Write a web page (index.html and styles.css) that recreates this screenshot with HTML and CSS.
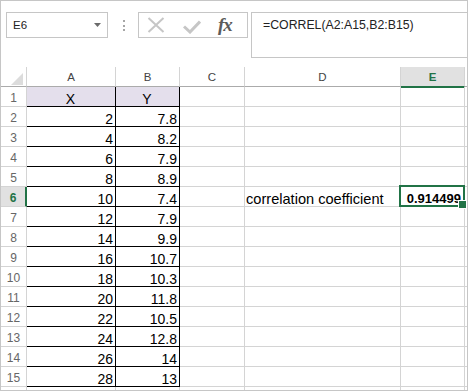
FILE: index.html
```html
<!DOCTYPE html>
<html lang="en">
<head>
  <meta charset="UTF-8">
  <title>CORREL</title>
  <link rel="stylesheet" href="styles.css">
</head>
<body>
  <div class="window">
    <div class="formula-bar">
      <div class="name-box">
        <span>E6</span>
        <svg width="7" height="4" viewBox="0 0 7 4"><polygon points="0,0 7,0 3.5,4" fill="#6b6b6b"/></svg>
      </div>
      <div class="grip"><i></i><i></i><i></i></div>
      <div class="fx-buttons">
        <svg class="icon-x" width="18" height="16" viewBox="0 0 18 16">
          <path d="M1.5 1 L16.5 15 M16.5 1 L1.5 15" stroke="#c6c6c6" stroke-width="2" fill="none"/>
        </svg>
        <svg class="icon-ok" width="18" height="14" viewBox="0 0 18 14">
          <path d="M1 6.5 L7 12 L17 1.5" stroke="#c6c6c6" stroke-width="3" fill="none"/>
        </svg>
        <span class="fx">fx</span>
      </div>
      <div class="formula-input">=CORREL(A2:A15,B2:B15)</div>
    </div>

    <div class="sheet">
      <div class="corner"><svg width="12" height="12" viewBox="0 0 12 12"><polygon points="12,0 12,12 0,12" fill="#dcdcdc"/></svg></div>
      <div class="col-head">A</div>
      <div class="col-head">B</div>
      <div class="col-head">C</div>
      <div class="col-head">D</div>
      <div class="col-head active">E</div>
      <div class="col-head"></div>

      <div class="row-head">1</div>
      <div class="cell box title">X</div>
      <div class="cell box title">Y</div>
      <div class="cell"></div><div class="cell"></div><div class="cell"></div><div class="cell"></div>

      <div class="row-head">2</div>
      <div class="cell box num">2</div><div class="cell box num">7.8</div>
      <div class="cell"></div><div class="cell"></div><div class="cell"></div><div class="cell"></div>

      <div class="row-head">3</div>
      <div class="cell box num">4</div><div class="cell box num">8.2</div>
      <div class="cell"></div><div class="cell"></div><div class="cell"></div><div class="cell"></div>

      <div class="row-head">4</div>
      <div class="cell box num">6</div><div class="cell box num">7.9</div>
      <div class="cell"></div><div class="cell"></div><div class="cell"></div><div class="cell"></div>

      <div class="row-head">5</div>
      <div class="cell box num">8</div><div class="cell box num">8.9</div>
      <div class="cell"></div><div class="cell"></div><div class="cell"></div><div class="cell"></div>

      <div class="row-head active">6</div>
      <div class="cell box num">10</div><div class="cell box num">7.4</div>
      <div class="cell"></div>
      <div class="cell label">correlation coefficient</div>
      <div class="cell num result">0.914499</div>
      <div class="cell"></div>

      <div class="row-head">7</div>
      <div class="cell box num">12</div><div class="cell box num">7.9</div>
      <div class="cell"></div><div class="cell"></div><div class="cell"></div><div class="cell"></div>

      <div class="row-head">8</div>
      <div class="cell box num">14</div><div class="cell box num">9.9</div>
      <div class="cell"></div><div class="cell"></div><div class="cell"></div><div class="cell"></div>

      <div class="row-head">9</div>
      <div class="cell box num">16</div><div class="cell box num">10.7</div>
      <div class="cell"></div><div class="cell"></div><div class="cell"></div><div class="cell"></div>

      <div class="row-head">10</div>
      <div class="cell box num">18</div><div class="cell box num">10.3</div>
      <div class="cell"></div><div class="cell"></div><div class="cell"></div><div class="cell"></div>

      <div class="row-head">11</div>
      <div class="cell box num">20</div><div class="cell box num">11.8</div>
      <div class="cell"></div><div class="cell"></div><div class="cell"></div><div class="cell"></div>

      <div class="row-head">12</div>
      <div class="cell box num">22</div><div class="cell box num">10.5</div>
      <div class="cell"></div><div class="cell"></div><div class="cell"></div><div class="cell"></div>

      <div class="row-head">13</div>
      <div class="cell box num">24</div><div class="cell box num">12.8</div>
      <div class="cell"></div><div class="cell"></div><div class="cell"></div><div class="cell"></div>

      <div class="row-head">14</div>
      <div class="cell box num">26</div><div class="cell box num">14</div>
      <div class="cell"></div><div class="cell"></div><div class="cell"></div><div class="cell"></div>

      <div class="row-head">15</div>
      <div class="cell box num">28</div><div class="cell box num">13</div>
      <div class="cell"></div><div class="cell"></div><div class="cell"></div><div class="cell"></div>

      <div class="row-head"></div>
      <div class="cell"></div><div class="cell"></div>
      <div class="cell"></div><div class="cell"></div><div class="cell"></div><div class="cell"></div>
    </div>
  </div>
</body>
</html>
```

FILE: styles.css
```css
* {
  box-sizing: border-box;
}

body {
  margin: 0;
  font-family: "Liberation Sans", Arial, sans-serif;
  background: #fff;
}

.window {
  width: 468px;
  height: 391px;
  border: 1px solid #c6c6c6;
  overflow: hidden;
}

/* formula bar */

.formula-bar {
  height: 66px;
  display: flex;
  align-items: flex-start;
  padding: 11px 0 0 5px;
}

.name-box {
  width: 102px;
  height: 26px;
  border: 1px solid #c6c6c6;
  display: flex;
  align-items: center;
  justify-content: space-between;
  padding: 0 6px 0 6px;
  font-size: 11.5px;
  color: #222;
}

.grip {
  display: flex;
  flex-direction: column;
  gap: 2.5px;
  margin: 8px 13px 0 15px;
}

.grip i {
  display: block;
  width: 2px;
  height: 2px;
  background: #a6a6a6;
}

.fx-buttons {
  width: 110px;
  height: 26px;
  border: 1px solid #c6c6c6;
  display: flex;
  align-items: center;
}

.icon-x {
  margin-left: 8px;
}

.icon-ok {
  margin: 3px 0 0 18px;
}

.fx {
  margin-left: 17px;
  font-family: "Liberation Serif", "Times New Roman", serif;
  font-style: italic;
  font-weight: bold;
  font-size: 19px;
  color: #5b5b5b;
  letter-spacing: -1px;
}

.formula-input {
  flex: 1;
  height: 46px;
  margin-left: 3px;
  border: 1px solid #c6c6c6;
  border-right: none;
  padding: 4px 0 0 11px;
  font-size: 12.3px;
  line-height: 16px;
  color: #222;
}

/* sheet */

.sheet {
  display: grid;
  grid-template-columns: 26px 89px 64px 65px 156px 64px 1fr;
  grid-auto-rows: 20px;
}

.corner,
.col-head,
.row-head,
.cell {
  border-right: 1px solid #d4d4d4;
  border-bottom: 1px solid #d4d4d4;
}

.corner {
  display: flex;
  align-items: flex-end;
  justify-content: flex-end;
  padding: 0 3px 1px 0;
  border-bottom-color: #ababab;
}

.col-head {
  border-bottom-color: #ababab;
  text-align: center;
  font-size: 11.5px;
  line-height: 17px;
  padding-top: 2px;
  color: #444;
}

.col-head.active {
  background: #e1e1e1;
  color: #217346;
  font-weight: bold;
  border-bottom-color: #217346;
  box-shadow: 0 1px 0 #217346;
}

.row-head {
  text-align: center;
  font-size: 12px;
  line-height: 15px;
  padding-top: 4px;
  color: #666;
}

.row-head.active {
  background: #e1e1e1;
  color: #217346;
  font-weight: bold;
  border-right: 2px solid #217346;
}

.cell {
  font-size: 14px;
  line-height: 14px;
  padding: 5px 2px 0 1px;
  white-space: nowrap;
  color: #000;
}

.cell.box {
  border-right-color: #000;
  border-bottom-color: #000;
}

.cell.title {
  background: #e4dfec;
  text-align: center;
}

.cell.num {
  text-align: right;
}

.cell.label {
  font-size: 14.6px;
}

.cell.result {
  position: relative;
  font-weight: bold;
  font-size: 13px;
  padding-right: 3px;
}

.cell.result::before {
  content: "";
  position: absolute;
  top: -2px;
  left: -2px;
  right: -1px;
  bottom: -1px;
  border: 2px solid #217346;
}

.cell.result::after {
  content: "";
  position: absolute;
  right: -3px;
  bottom: -3px;
  width: 7px;
  height: 7px;
  background: #217346;
  border: 1px solid #fff;
}
```
